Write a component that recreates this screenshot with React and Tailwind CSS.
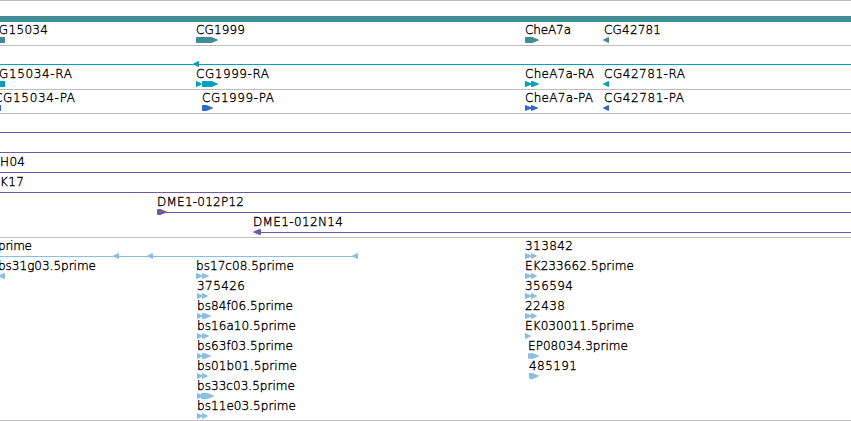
import React from 'react';

const WIDTH = 851;
const ROW_HEIGHT = 20;

const COLORS = {
    gene: '#3f8e93',
    transcript: '#009fbb',
    protein: '#3069cb',
    clone: '#7458a5',
    insertion: '#8bbfdf',
};

// label: [text, x, width]
// shapes: ['line' | 'right' | 'left' | 'box', start, end]
const TRACKS = [
    {
        id: 'gene',
        rows: [
            {
                labels: [['CG15034', -10, 58], ['CG1999', 196, 49], ['CheA7a', 525, 46], ['CG42781', 604, 57]],
                shapes: [['box', 0, 5], ['right', 196, 218], ['right', 525, 539], ['left', 603, 609]],
            },
        ],
    },
    {
        id: 'transcript',
        rows: [
            { labels: [], shapes: [['line', 0, 851], ['left', 193, 199]] },
            {
                labels: [['CG15034-RA', -10, 82], ['CG1999-RA', 196, 73], ['CheA7a-RA', 525, 69], ['CG42781-RA', 604, 81]],
                shapes: [
                    ['box', 0, 5], ['right', 196, 202], ['right', 202, 218],
                    ['right', 525, 532], ['right', 531, 539], ['left', 603, 609],
                ],
            },
        ],
    },
    {
        id: 'protein',
        rows: [
            {
                labels: [['CG15034-PA', -6, 81], ['CG1999-PA', 202, 72], ['CheA7a-PA', 525, 68], ['CG42781-PA', 604, 80]],
                shapes: [['box', 0, 1], ['right', 202, 213], ['right', 525, 532], ['right', 531, 538], ['left', 603, 609]],
            },
        ],
    },
    {
        id: 'clone',
        rows: [
            { labels: [], shapes: [['line', 0, 851]] },
            { labels: [], shapes: [['line', 0, 851]] },
            { labels: [['H04', 0, 25]], shapes: [['line', 0, 851]] },
            { labels: [['K17', 0, 24]], shapes: [['line', 0, 851]] },
            { labels: [['DME1-012P12', 157, 87]], shapes: [['right', 157, 167], ['line', 165, 851]] },
            { labels: [['DME1-012N14', 253, 90]], shapes: [['left', 253, 261], ['line', 259, 851]] },
        ],
    },
    {
        id: 'insertion',
        rows: [
            {
                labels: [['prime', -2, 34], ['313842', 525, 48]],
                shapes: [
                    ['line', 0, 357], ['left', 113, 119], ['left', 147, 153], ['left', 352, 358],
                    ['right', 525, 532], ['right', 531, 537],
                ],
            },
            {
                labels: [['bs31g03.5prime', -2, 98], ['bs17c08.5prime', 196, 98], ['EK233662.5prime', 525, 109]],
                shapes: [['left', -2, 5], ['right', 196, 203], ['right', 202, 209], ['right', 525, 532], ['right', 531, 537]],
            },
            {
                labels: [['375426', 197, 48], ['356594', 525, 48]],
                shapes: [['right', 197, 203], ['right', 202, 208], ['right', 525, 532], ['right', 531, 537]],
            },
            {
                labels: [['bs84f06.5prime', 197, 96], ['22438', 525, 40]],
                shapes: [['right', 197, 203], ['right', 202, 211], ['right', 525, 532], ['right', 531, 537]],
            },
            {
                labels: [['bs16a10.5prime', 197, 99], ['EK030011.5prime', 525, 109]],
                shapes: [['right', 197, 203], ['right', 202, 209], ['right', 525, 531]],
            },
            {
                labels: [['bs63f03.5prime', 197, 96], ['EP08034.3prime', 528, 100]],
                shapes: [['right', 197, 203], ['right', 202, 211], ['right', 528, 534], ['right', 530, 539]],
            },
            {
                labels: [['bs01b01.5prime', 197, 100], ['485191', 529, 48]],
                shapes: [['right', 197, 203], ['right', 202, 208], ['right', 529, 539]],
            },
            {
                labels: [['bs33c03.5prime', 197, 98]],
                shapes: [['right', 197, 203], ['right', 201, 214]],
            },
            {
                labels: [['bs11e03.5prime', 197, 99]],
                shapes: [['right', 197, 203], ['right', 202, 208]],
            },
        ],
    },
];

const Shape = ({ kind, start, end, color }) => {
    if (kind === 'line') {
        return <rect x={start} y={16} width={end - start} height={1} fill={color} shapeRendering="crispEdges" />;
    }
    if (kind === 'box') {
        return <rect x={start} y={13} width={end - start} height={6} fill={color} />;
    }
    // inset by half the outline, which fills the feature out to its full height
    const a = start + 0.5;
    const b = end - 0.5;
    const head = Math.min(6, b - a);
    const points = kind === 'right'
        ? `${a},13.5 ${b - head},13.5 ${b},16 ${b - head},18.5 ${a},18.5`
        : `${b},13.5 ${a + head},13.5 ${a},16 ${a + head},18.5 ${b},18.5`;
    return <polygon points={points} fill={color} stroke={color} strokeWidth={1} strokeLinejoin="round" />;
};

const Row = ({ row, color }) => (
    <svg width={WIDTH} height={ROW_HEIGHT} className="block">
        {row.shapes.map(([kind, start, end], i) => (
            <Shape key={i} kind={kind} start={start} end={end} color={color} />
        ))}
        {row.labels.map(([text, x, width]) => (
            <text
                key={text}
                x={x}
                y={10}
                textLength={width}
                className="fill-black stroke-black text-[12px] font-extralight font-['DejaVu_Sans',sans-serif]"
                strokeWidth={0.35}
            >
                {text}
            </text>
        ))}
    </svg>
);

export default function App() {
    return (
        <div className="w-[851px] h-[421px] bg-white overflow-hidden border-t border-[#bebebe]">
            <div className="mt-[15px] mb-0 h-1.5 bg-[#3f8e93]" />
            {TRACKS.map(track => (
                <div
                    key={track.id}
                    className={`border-b border-[#bebebe] pt-0.5 ${track.id === 'insertion' ? '' : 'pb-px'}`}
                >
                    {track.rows.map((row, i) => (
                        <Row key={i} row={row} color={COLORS[track.id]} />
                    ))}
                </div>
            ))}
        </div>
    );
}
